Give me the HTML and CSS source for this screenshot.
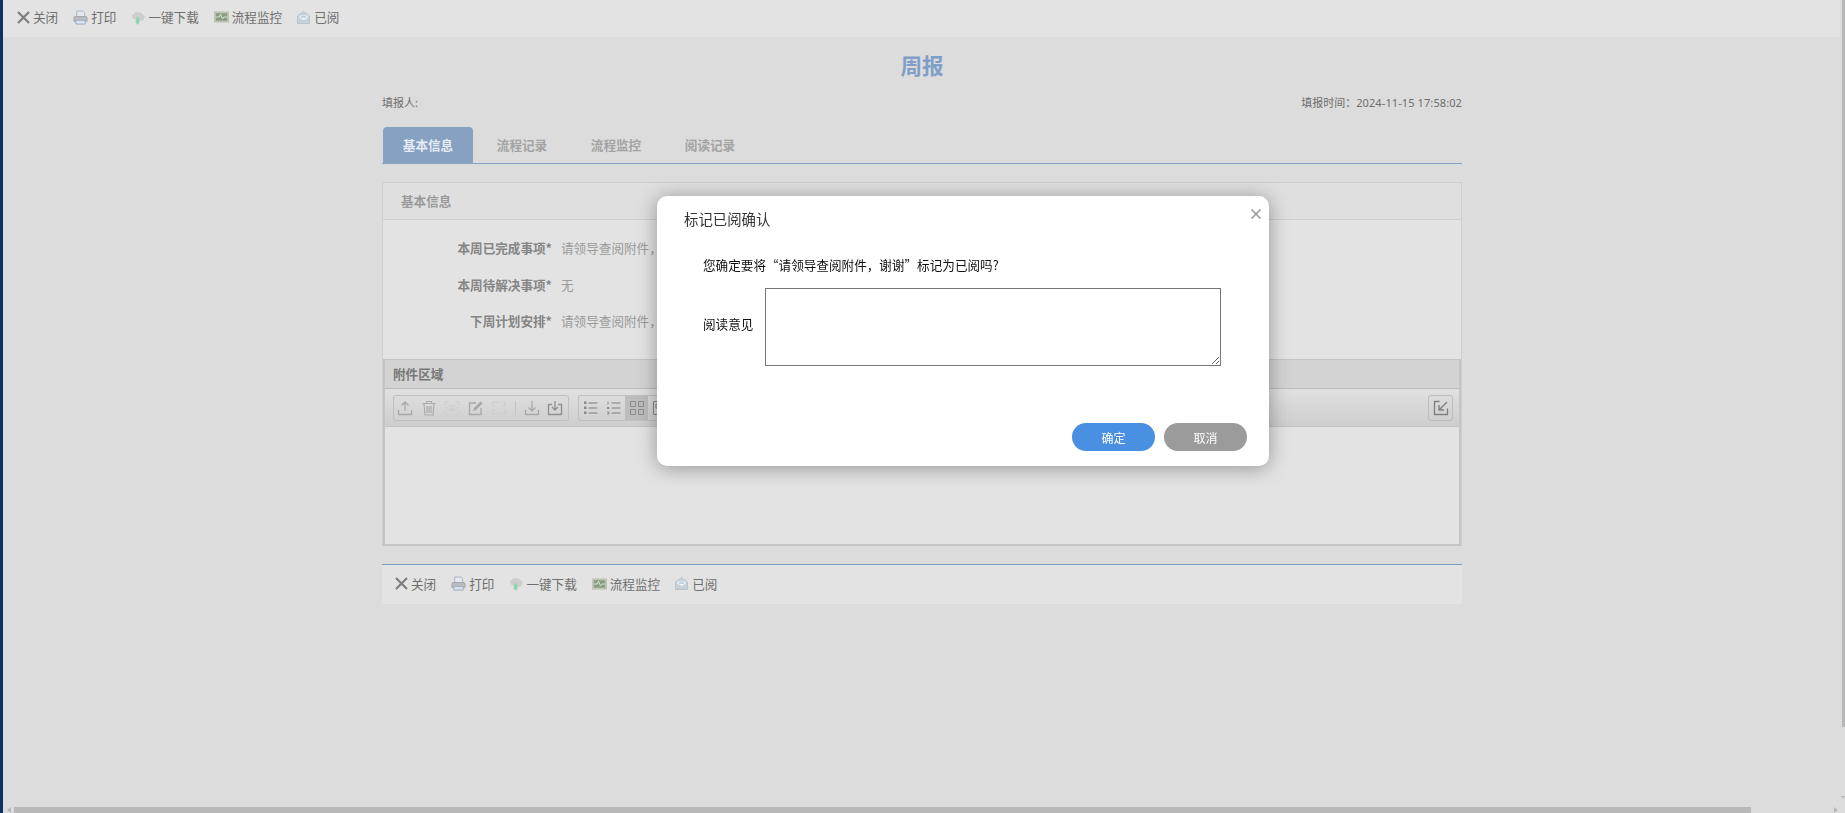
FILE: index.html
```html
<!DOCTYPE html>
<html lang="zh-CN">
<head>
<meta charset="utf-8">
<title>周报</title>
<link rel="stylesheet" href="styles.css">
</head>
<body>
<svg class="defs" width="0" height="0" aria-hidden="true">
  <defs>
    <symbol id="i-close" viewBox="0 0 13 13"><path d="M1 1l11 11M12 1L1 12" stroke="#7f7f7f" stroke-width="2.200" fill="none"/></symbol>
    <symbol id="i-print" viewBox="0 0 16 16"><path d="M4 7V1h6.500L12.500 3v4z" fill="#e4e8ec" stroke="#a9b4c2"/><path d="M1 8.500Q1 7 2.500 7h11Q15 7 15 8.500V12H1z" fill="#bdbdbd" stroke="#a0a4aa"/><path d="M3 11h10v4H3z" fill="#dfe3e8" stroke="#93abc8"/></symbol>
    <symbol id="i-down" viewBox="0 0 16 16"><path d="M1 5.500L5 2l6 1 4 4-2 4-4 1-3-1-4-2z" fill="#cdcdcd"/><path d="M5.500 8h3l.5 5-2 3-2-3z" fill="#8ed6ae"/></symbol>
    <symbol id="i-mon" viewBox="0 0 16 12"><rect width="16" height="12" fill="#bfc4b6"/><rect x="2" y="2" width="12" height="8" fill="#8b9c82"/><path d="M2 6h3.500l1.500-3 2 5 1.500-2H14" stroke="#dde5d6" fill="none"/></symbol>
    <symbol id="i-read" viewBox="0 0 13 13"><path d="M0.500 5L6.500 0.500 12.500 5v7.500H0.500z" fill="#c6d0d8" stroke="#bcc5cc"/><path d="M2.500 4.500h8V7l-4 2-4-2z" fill="#f0f2f4"/><path d="M4 6h5" stroke="#8fb2d0"/></symbol>
    <symbol id="i-up" viewBox="0 0 16 16"><path d="M8 11V2M4.500 5.500L8 2l3.500 3.500M1.500 10v4.500h13V10" stroke="#a8a8a8" stroke-width="1.300" fill="none"/></symbol>
    <symbol id="i-trash" viewBox="0 0 16 16"><path d="M1.500 3.500h13M5.500 3V1.500h5V3M3 4l1 11h8l1-11M6 6v7M8 6v7M10 6v7" stroke="#adadad" stroke-width="1.200" fill="none"/></symbol>
    <symbol id="i-eye" viewBox="0 0 16 16"><path d="M1 5V1.500h3.500M11.500 1.500H15V5M15 11v3.500h-3.500M4.500 14.500H1V11M2.500 8C5 4.500 11 4.500 13.500 8 11 11.500 5 11.500 2.500 8z" stroke="#cdcdcd" fill="none"/><circle cx="8" cy="8" r="1.500" fill="#cdcdcd"/></symbol>
    <symbol id="i-edit" viewBox="0 0 16 16"><path d="M13 8v6.500H1.500V3H8" stroke="#a8a8a8" stroke-width="1.300" fill="none"/><path d="M5 11l1-3 6.500-6.500 2 2L8 10z" fill="#a8a8a8"/></symbol>
    <symbol id="i-swap" viewBox="0 0 16 16"><path d="M2 7V2h5v2M14 9v5H9v-2M9 2h5v4h-3M7 14H2v-4h3" stroke="#cdcdcd" stroke-width="1.200" fill="none"/></symbol>
    <symbol id="i-dl" viewBox="0 0 16 16"><path d="M8 1v10M4.500 7.500L8 11l3.500-3.500M1.500 10v4.500h13V10" stroke="#a8a8a8" stroke-width="1.300" fill="none"/></symbol>
    <symbol id="i-dlbox" viewBox="0 0 16 16"><path d="M5 4.500H1.500v10h13v-10H11M8 1v9M5 7l3 3 3-3" stroke="#8f8f8f" stroke-width="1.300" fill="none"/></symbol>
    <symbol id="i-list" viewBox="0 0 16 16"><path d="M5.500 3h9M5.500 8h9M5.500 13h9" stroke="#9c9c9c" stroke-width="1.400"/><rect x="1" y="1.500" width="2.500" height="2.500" fill="#8a8a8a"/><rect x="1" y="6.500" width="2.500" height="2.500" fill="#8a8a8a"/><rect x="1" y="11.500" width="2.500" height="2.500" fill="#8a8a8a"/></symbol>
    <symbol id="i-list2" viewBox="0 0 16 16"><path d="M5.500 3h9M5.500 8h9M5.500 13h9" stroke="#9c9c9c" stroke-width="1.400"/><path d="M2 1.500v3M1 7.500h2v1H1M1 12h2v2H1" stroke="#8a8a8a" fill="none"/></symbol>
    <symbol id="i-grid" viewBox="0 0 16 16"><path d="M1.500 1.500h5v5h-5zM9.500 1.500h5v5h-5zM1.500 9.500h5v5h-5zM9.500 9.500h5v5h-5z" stroke="#8c8c8c" fill="none"/></symbol>
    <symbol id="i-frame" viewBox="0 0 16 16"><path d="M1.500 1.500h13v13h-13zM4 4h4v4H4z" stroke="#8c8c8c" fill="none"/></symbol>
    <symbol id="i-shrink" viewBox="0 0 16 16"><path d="M6.500 1.500h-5v13h13V8.500M14 2L6 10M6 5v5h5" stroke="#808080" stroke-width="1.400" fill="none"/></symbol>
  </defs>
</svg>

<div class="screen">
  <div class="accent"></div>
  <div class="main">
    <div class="viewport">
      <div class="column">
        <div class="actions actions-top">
          <a class="action"><svg class="ic ic-close"><use href="#i-close"/></svg>关闭</a>
          <a class="action"><svg class="ic"><use href="#i-print"/></svg>打印</a>
          <a class="action"><svg class="ic ic-down"><use href="#i-down"/></svg>一键下载</a>
          <a class="action"><svg class="ic ic-mon"><use href="#i-mon"/></svg>流程监控</a>
          <a class="action"><svg class="ic ic-read"><use href="#i-read"/></svg>已阅</a>
        </div>
        <div class="sheet">
          <h1 class="title">周报</h1>
          <div class="meta"><span>填报人:</span><span>填报时间：<span class="stamp">2024-11-15 17:58:02</span></span></div>
          <div class="tabs">
            <span class="tab tab-on">基本信息</span>
            <span class="tab">流程记录</span>
            <span class="tab">流程监控</span>
            <span class="tab">阅读记录</span>
          </div>
          <section class="panel">
            <div class="panel-head">基本信息</div>
            <div class="form">
              <div class="row"><span class="label">本周已完成事项*</span><span class="value">请领导查阅附件，谢谢</span></div>
              <div class="row"><span class="label">本周待解决事项*</span><span class="value">无</span></div>
              <div class="row"><span class="label">下周计划安排*</span><span class="value">请领导查阅附件，谢谢</span></div>
            </div>
            <div class="attach">
              <div class="attach-head">附件区域</div>
              <div class="attach-bar">
                <div class="group group-a">
                  <svg class="tool"><use href="#i-up"/></svg>
                  <svg class="tool"><use href="#i-trash"/></svg>
                  <svg class="tool"><use href="#i-eye"/></svg>
                  <svg class="tool"><use href="#i-edit"/></svg>
                  <svg class="tool"><use href="#i-swap"/></svg>
                  <i class="sep"></i>
                  <svg class="tool"><use href="#i-dl"/></svg>
                  <svg class="tool"><use href="#i-dlbox"/></svg>
                </div>
                <div class="group group-b">
                  <span class="cell"><svg class="tool"><use href="#i-list"/></svg></span>
                  <span class="cell"><svg class="tool"><use href="#i-list2"/></svg></span>
                  <span class="cell cell-on"><svg class="tool"><use href="#i-grid"/></svg></span>
                  <span class="cell"><svg class="tool"><use href="#i-frame"/></svg></span>
                </div>
                <button class="shrink"><svg class="tool"><use href="#i-shrink"/></svg></button>
              </div>
              <div class="attach-body"></div>
            </div>
          </section>
          <div class="actions actions-bottom">
            <a class="action"><svg class="ic ic-close"><use href="#i-close"/></svg>关闭</a>
            <a class="action"><svg class="ic"><use href="#i-print"/></svg>打印</a>
            <a class="action"><svg class="ic ic-down"><use href="#i-down"/></svg>一键下载</a>
            <a class="action"><svg class="ic ic-mon"><use href="#i-mon"/></svg>流程监控</a>
            <a class="action"><svg class="ic ic-read"><use href="#i-read"/></svg>已阅</a>
          </div>
        </div>
      </div>
      <div class="vscroll"><i class="vthumb"></i><i class="varrow"></i></div>
    </div>
    <div class="hscroll">
      <i class="arrow arrow-l"></i>
      <i class="hthumb"></i>
      <i class="arrow arrow-r"></i>
    </div>
  </div>
</div>

<div class="dialog" role="dialog">
  <div class="dialog-title">标记已阅确认</div>
  <button class="dialog-x" aria-label="关闭"><svg viewBox="0 0 12 12"><path d="M1.500 1.500l9 9M10.500 1.500l-9 9" stroke="#9c9c9c" stroke-width="1.700" fill="none"/></svg></button>
  <p class="dialog-msg">您确定要将“请领导查阅附件，谢谢”标记为已阅吗?</p>
  <div class="dialog-field">
    <label class="dialog-label" for="opinion">阅读意见</label>
    <textarea class="dialog-input" id="opinion"></textarea>
  </div>
  <div class="dialog-btns">
    <button class="pill pill-ok">确定</button>
    <button class="pill pill-no">取消</button>
  </div>
</div>
</body>
</html>
```

FILE: styles.css
```css
* { box-sizing: border-box; }
html, body { margin: 0; height: 100%; overflow: hidden; }
body {
  background: #dcdcdc;
  color: #6f6f6f;
  font: 12.600px/1.4 "Noto Sans CJK SC", "Noto Sans", sans-serif;
}
.defs { display: block; height: 0; }
.screen { display: flex; height: 813px; }
.accent { width: 3px; flex: none; background: #0a3469; }
.main { flex: 1; min-width: 0; display: flex; flex-direction: column; }
.viewport { flex: 1; min-height: 0; display: flex; }
.column { flex: 1; min-width: 0; padding-right: 2px; }
.vscroll { width: 3px; flex: none; }
.vthumb { display: block; height: 727px; background: #b8b8b8; }
.varrow { display: block; width: 0; height: 0; margin: 69px 0 0 -1px; border-left: 2px solid transparent; border-right: 2px solid transparent; border-top: 3px solid #b8b8b8; }
.hscroll { height: 6px; flex: none; display: flex; align-items: center; padding-left: 3px; }
.hthumb { display: block; width: 1737px; height: 6px; background: #b8b8b8; margin-left: 3px; margin-right: 83px; }
.arrow { display: block; width: 0; height: 0; border-top: 3px solid transparent; border-bottom: 3px solid transparent; }
.arrow-l { border-right: 4px solid #b8b8b8; margin-left: 1px; }
.arrow-r { border-left: 4px solid #b8b8b8; }

.actions { display: flex; align-items: center; background: #e3e3e3; color: #6f6f6f; }
.actions-top { height: 37px; padding: 0 0 3px 14px; }
.actions-bottom { height: 40px; margin-top: 18px; padding: 0 0 2px 13px; border-top: 1px solid #7d9cc4; }
.action { display: flex; align-items: center; margin-right: 15px; white-space: nowrap; line-height: 18px; }
.ic { width: 15px; height: 15px; margin-right: 3px; flex: none; }
.ic-close { width: 13px; height: 13px; }
.ic-down { margin-right: 2px; }
.ic-mon { height: 12px; }
.ic-read { width: 13px; height: 13px; margin-right: 4px; }

.sheet { width: 1080px; margin-left: 379px; }
.title { margin: 0; height: 54px; padding-top: 14px; text-align: center; font-size: 21.600px; line-height: 28px; font-weight: 700; color: #7f9fc9; }
.meta { display: flex; justify-content: space-between; height: 36px; padding-top: 3px; font-size: 11px; line-height: 16px; color: #6e6e6e; }
.stamp { font-family: "Noto Sans", sans-serif; letter-spacing: .1px; }
.tabs { display: flex; height: 37px; border-bottom: 1px solid #8aa3c4; padding-left: 1px; }
.tab { width: 94px; text-align: center; padding-top: 9px; font-weight: 700; line-height: 18px; color: #a3a3a3; }
.tab-on { width: 90px; margin-right: 2px; background: #86a1c2; color: #e6ecf3; border-radius: 4px 4px 0 0; }
.panel { margin-top: 18px; border: 1px solid #cfcfcf; border-bottom: 0; background: #e3e3e3; }
.panel-head { height: 37px; padding: 9px 18px 0; background: #dfdfdf; border-bottom: 1px solid #cfcfcf; color: #9a9a9a; font-weight: 700; line-height: 18px; }
.form { height: 139px; padding-top: 10px; }
.row { display: flex; height: 36.500px; line-height: 36px; }
.label { width: 169px; text-align: right; font-weight: 700; color: #858585; }
.value { margin-left: 9px; color: #9a9a9a; }
.attach { border: 2px solid #c4c4c4; border-top: 1px solid #c4c4c4; }
.attach-head { height: 29px; padding: 5px 8px 0; background: #d3d3d3; border-bottom: 1px solid #bcbcbc; font-weight: 700; color: #777; line-height: 18px; }
.attach-bar { height: 38px; display: flex; align-items: center; padding: 0 6px 0 8px; background: linear-gradient(#e0e0e0, #cecece); border-bottom: 1px solid #c2c2c2; }
.group { display: flex; align-items: center; height: 26px; border: 1px solid #c0c0c0; border-radius: 3px; }
.group-a { width: 176px; padding-left: 3px; gap: 7.500px; }
.group-b { margin-left: 9px; width: 200px; border-right: 0; overflow: hidden; }
.cell { width: 23px; height: 24px; display: flex; align-items: center; justify-content: center; flex: none; }
.cell-on { background: #bdbdbd; }
.tool { width: 16px; height: 16px; flex: none; display: block; }
.sep { width: 1px; height: 14px; margin-right: .500px; background: #c4c4c4; }
.shrink { margin-left: auto; width: 25px; height: 26px; padding: 0; display: flex; align-items: center; justify-content: center; background: transparent; border: 1px solid #bdbdbd; border-radius: 3px; }
.attach-body { height: 117px; background: #e3e3e3; }

.dialog { position: fixed; left: 657px; top: 196px; width: 612px; height: 270px; background: #fff; border-radius: 10px; box-shadow: 0 2px 20px rgba(0,0,0,.35); color: #000; padding: 14px 27px 0 27px; }
.dialog-title { font-size: 14.400px; line-height: 18px; color: #333; height: 18px; }
.dialog-x { position: absolute; right: 7px; top: 12px; width: 12px; height: 12px; padding: 0; border: 0; background: none; }
.dialog-x svg { display: block; width: 12px; height: 12px; }
.dialog-msg { margin: 28px 0 0 19px; line-height: 18px; color: #111; }
.dialog-field { display: flex; align-items: center; margin: 14px 0 0 19px; }
.dialog-label { width: 62px; color: #111; margin-top: -6px; flex: none; }
.dialog-input { width: 456px; height: 78px; border: 1px solid #767676; background: #fff; margin: 0; display: block; border-radius: 0; }
.dialog-btns { display: flex; justify-content: flex-end; gap: 9px; margin-top: 57px; margin-right: -5px; }
.pill { width: 83px; height: 28px; border: 0; border-radius: 14px; color: #fff; font: 12px "Noto Sans CJK SC", sans-serif; padding: 0; }
.pill-ok { background: #4a90e2; }
.pill-no { background: #9b9b9b; }
```
